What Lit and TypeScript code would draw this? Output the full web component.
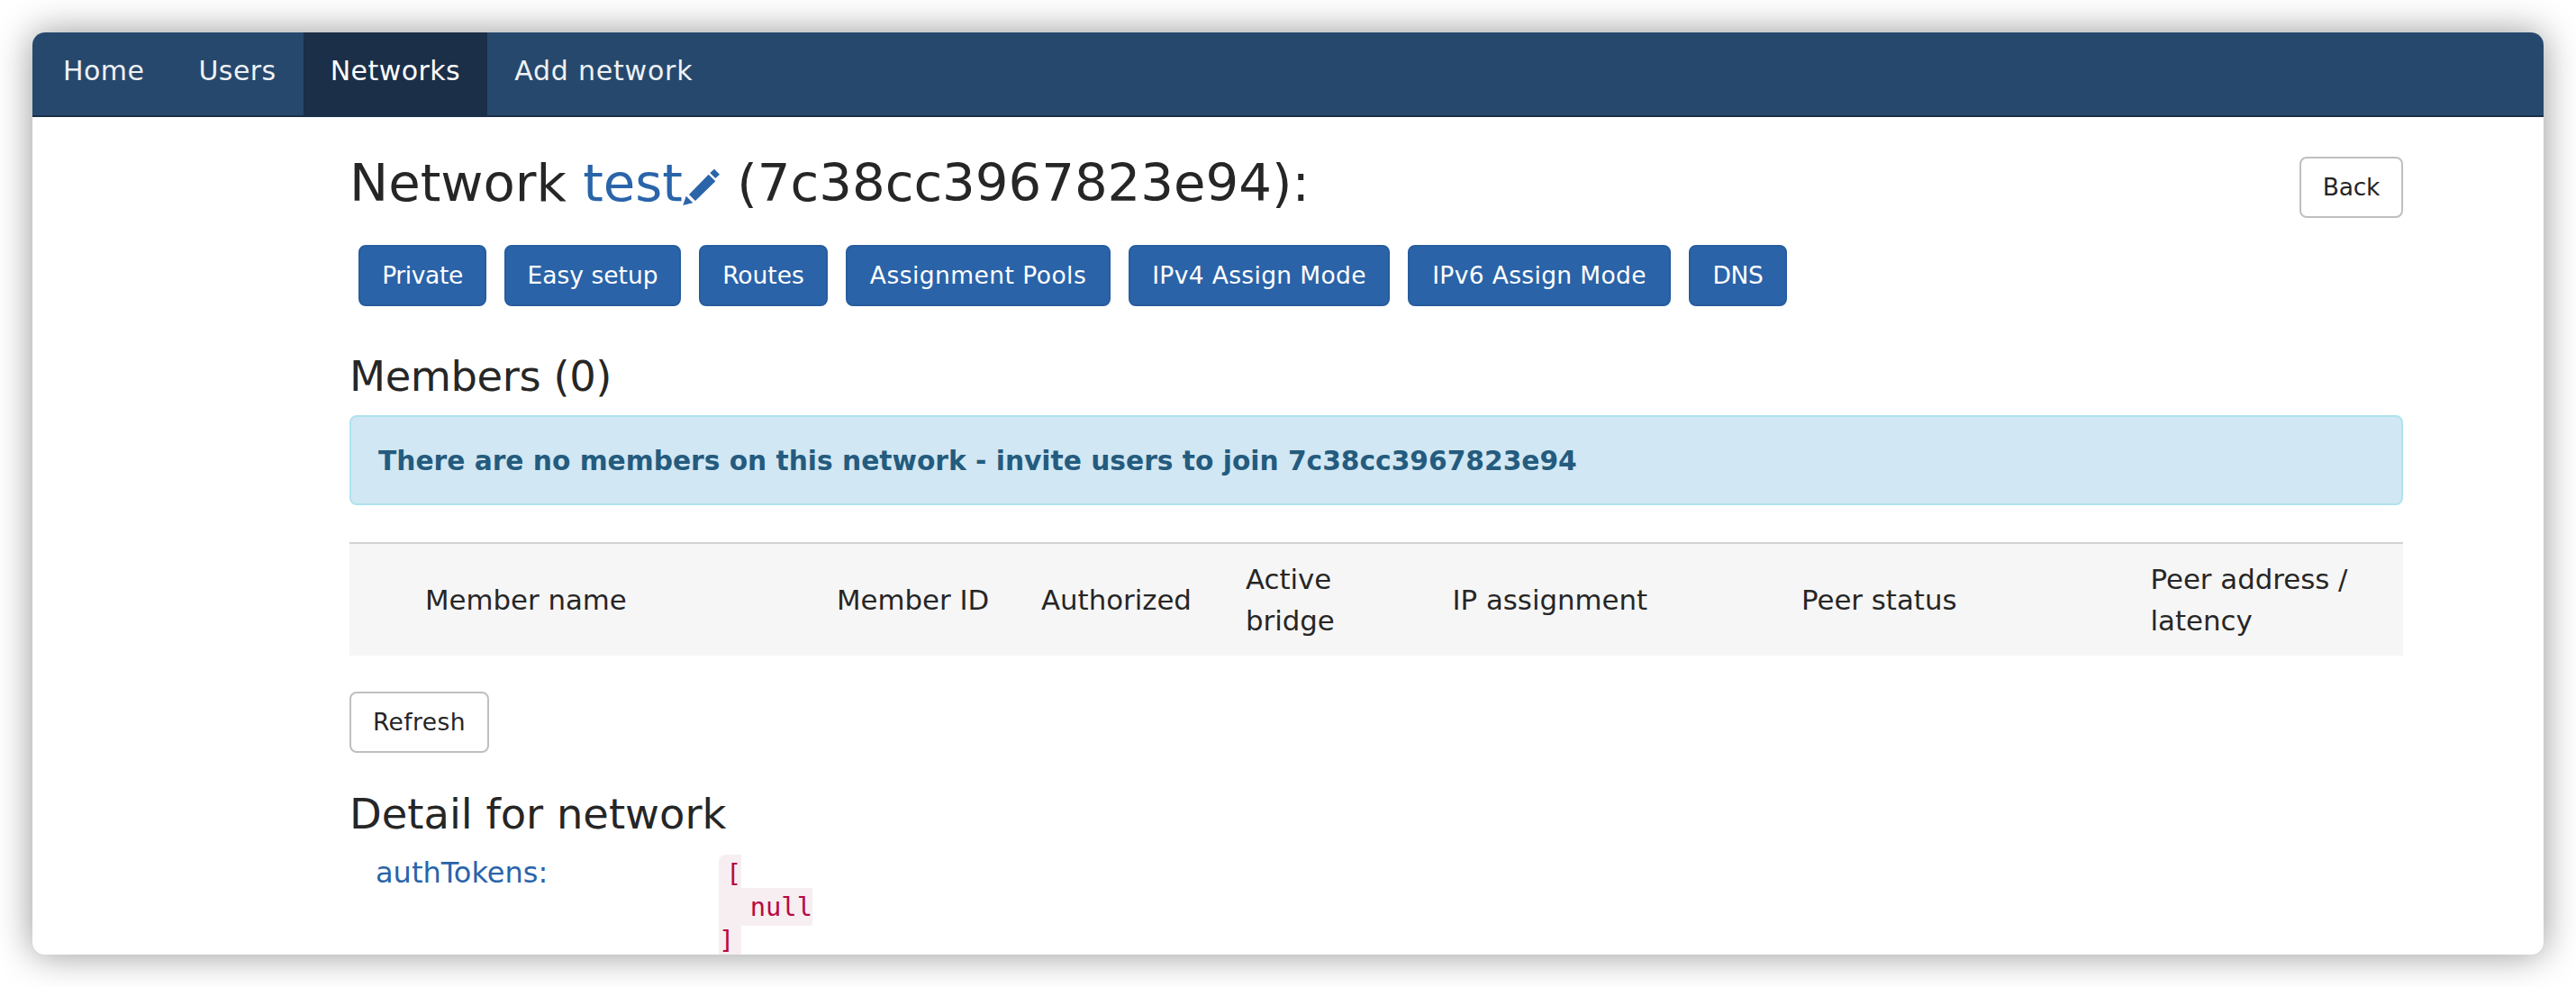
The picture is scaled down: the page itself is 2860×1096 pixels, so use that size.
import { LitElement, css, html } from 'lit';
import { customElement } from 'lit/decorators.js';

const ACTIONS = ['Private', 'Easy setup', 'Routes', 'Assignment Pools', 'IPv4 Assign Mode', 'IPv6 Assign Mode', 'DNS'];

@customElement('app-root')
export class AppRoot extends LitElement {
  static styles = css`
    :host {
      display: block;
      height: 1096px;
      padding: 36px 36px 0;
      box-sizing: border-box;
      background: #fff;
      font-family: 'DejaVu Sans', sans-serif;
      color: #262626;
    }

    a {
      color: #2a64a9;
      text-decoration: none;
    }

    .window {
      height: 1024px;
      background: #fff;
      border-radius: 14px;
      box-shadow: 0 0 40px rgba(0, 0, 0, 0.42);
      overflow: hidden;
    }

    .navbar {
      display: flex;
      height: 92px;
      padding-left: 4px;
      background: #26486d;
      border-bottom: 2px solid #1b2f49;
    }

    .navbar a {
      padding: 0 30px;
      font-size: 30px;
      letter-spacing: 0.45px;
      line-height: 86px;
      color: #eef1f4;
    }

    .navbar a:last-child {
      letter-spacing: 0.8px;
    }

    .navbar a.active {
      background: #1b2f49;
      color: #fff;
    }

    .main {
      padding: 44px 156px 0 352px;
    }

    .head {
      display: flex;
      justify-content: space-between;
      align-items: flex-start;
    }

    h2 {
      margin: 0;
      font-size: 57.7px;
      font-weight: 400;
      line-height: 58px;
    }

    .pencil {
      width: 42px;
      height: 42px;
      fill: #2a64a9;
      vertical-align: -6px;
    }

    .btn {
      box-sizing: border-box;
      height: 68px;
      padding: 0 24px;
      border: 2px solid #bfbfbf;
      border-radius: 8px;
      background: #fff;
      color: #262626;
      font-family: inherit;
      font-size: 26.5px;
      line-height: 62px;
      white-space: nowrap;
    }

    .back {
      letter-spacing: -0.3px;
    }

    .actions {
      display: grid;
      grid-template-columns: 142px 196px 143px 294px 290px 292px 109px;
      justify-content: start;
      gap: 20px;
      margin: 30px 0 0 10px;
    }

    .actions .btn {
      padding: 0;
      background: #2a63a8;
      border-color: #275d9d;
      color: #fff;
    }

    .actions .btn:nth-child(1) {
      letter-spacing: -0.4px;
    }

    .actions .btn:nth-child(4) {
      letter-spacing: 0.45px;
    }

    .actions .btn:nth-child(5),
    .actions .btn:nth-child(6) {
      letter-spacing: 0.35px;
    }

    .actions .btn:nth-child(7) {
      letter-spacing: -0.3px;
    }

    h3 {
      margin: 0;
      font-size: 46.4px;
      font-weight: 400;
      line-height: 54px;
    }

    .members {
      margin-top: 51px;
      letter-spacing: -0.4px;
    }

    .alert {
      box-sizing: border-box;
      height: 100px;
      margin-top: 16px;
      padding: 0 30px;
      border: 2px solid #aee3ee;
      border-radius: 8px;
      background: #d1e7f3;
      color: #245b7e;
      font-size: 29.7px;
      font-weight: 700;
      line-height: 98px;
    }

    .table-head {
      display: grid;
      grid-template-columns: 541px 227px 227px 229.5px 387.5px 387.5px 1fr;
      align-items: center;
      height: 124px;
      margin-top: 41px;
      background: #f6f6f6;
      border-top: 2px solid #d3d3d3;
      font-size: 30.8px;
      line-height: 46px;
    }

    .table-head span:first-child {
      padding-left: 84px;
    }

    .refresh {
      display: block;
      margin-top: 40px;
      letter-spacing: 0.4px;
    }

    .detail {
      margin-top: 41px;
    }

    .field {
      display: flex;
      margin-top: 18px;
      padding-left: 29px;
    }

    .field a {
      width: 381px;
      font-size: 32px;
      line-height: 40px;
    }

    .value {
      margin-top: 3px;
    }

    code {
      padding: 4px 8px;
      border-radius: 8px;
      background: #f7eef2;
      color: #b80a42;
      font-family: 'DejaVu Sans Mono', monospace;
      font-size: 28.8px;
      line-height: 37px;
      white-space: pre;
    }
  `;

  render() {
    return html`
      <div class="window">
        <nav class="navbar">
          <a href="#">Home</a>
          <a href="#">Users</a>
          <a href="#" class="active">Networks</a>
          <a href="#">Add network</a>
        </nav>
        <div class="main">
          <div class="head">
            <h2>Network <a href="#">test<svg class="pencil" viewBox="0 0 42 42"><path d="M.3 41 3.7 30.7 11.3 38.3ZM7 29 28.7 6.7 36.3 14.3 14 36ZM30.3 5 35 .7 41 6.7 36.3 11Z"/></svg></a> (7c38cc3967823e94):</h2>
            <button class="btn back">Back</button>
          </div>
          <div class="actions">
            ${ACTIONS.map((a) => html`<button class="btn">${a}</button>`)}
          </div>
          <h3 class="members">Members (0)</h3>
          <div class="alert">There are no members on this network - invite users to join 7c38cc3967823e94</div>
          <div class="table-head">
            <span>Member name</span>
            <span>Member ID</span>
            <span>Authorized</span>
            <span>Active<br />bridge</span>
            <span>IP assignment</span>
            <span>Peer status</span>
            <span>Peer address /<br />latency</span>
          </div>
          <button class="btn refresh">Refresh</button>
          <h3 class="detail">Detail for network</h3>
          <div class="field">
            <a href="#">authTokens:</a>
            <div class="value"><code>[
  null
]</code></div>
          </div>
        </div>
      </div>
    `;
  }
}
